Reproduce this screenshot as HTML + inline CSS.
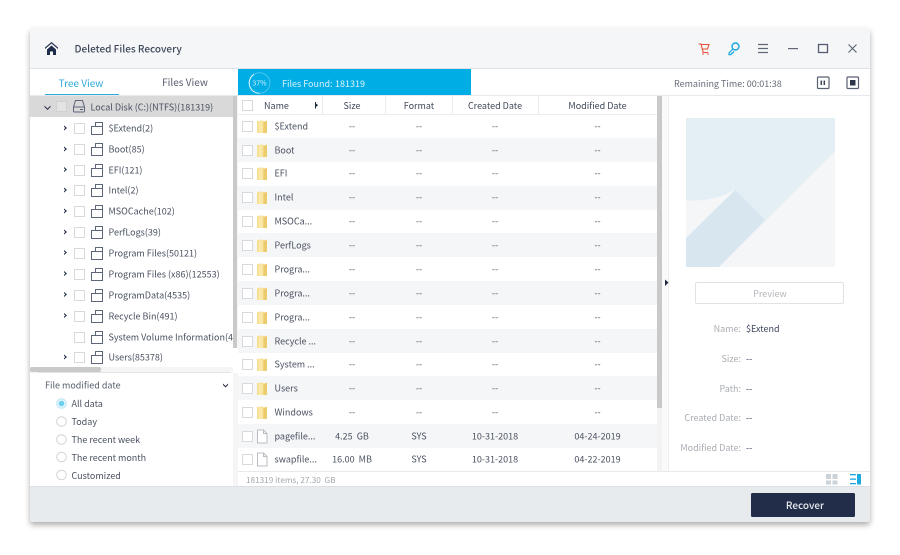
<!DOCTYPE html>
<html><head><meta charset="utf-8"><style>
html,body{margin:0;padding:0;background:#fff;width:900px;height:555px;overflow:hidden}
svg{display:block}
text{font-family:"Noto Sans CJK SC","Liberation Sans",sans-serif;font-size:9px;fill:#4a5160}
.m{text-anchor:middle}.e{text-anchor:end}
.cb{fill:#fff;stroke:#d8d9dc;stroke-width:1}
.ic{fill:none;stroke:#5d6578;stroke-width:1}
.t text{transform:translate(-.5px,-.5px)}
.r text{transform:translateY(-.5px)}
.r text.n{transform:translate(-.5px,-.5px)}
</style></head><body>
<svg width="900" height="555" viewBox="0 0 900 555" xmlns="http://www.w3.org/2000/svg">
<defs>
<filter id="s" x="-5%" y="-5%" width="110%" height="112%"><feDropShadow dx="0" dy="3" stdDeviation="3" flood-color="#000" flood-opacity=".32"/></filter>
<g id="fd"><path d="M.5 1.500 6 1 7.500 2H10.500V13.500H.5Z" fill="#f6de90"/><rect x="2" y="2" width="4" height="11.500" fill="#f9e8a8"/><path d="M7 2.500 10.500 1V13.500H7Z" fill="#eccb6c"/></g>
<g id="fl"><path d="M.5 .5H6.500L10 4V13.500H.5Z" fill="#fff" stroke="#b9bcc2"/><path d="M6.500 .5V4H10" fill="none" stroke="#b9bcc2"/></g>
<g id="tf"><path class="ic" d="M.5 4.500H4.500V.5H11.500V12.500H.5ZM.5 4.500H11.500" /></g>
<path id="ar" d="M0 0 3 2.500 0 5 0 3.700 1.300 2.500 0 1.300Z" fill="#1f2a40"/>
</defs>
<rect x="30" y="28" width="840" height="494" rx="3" fill="#fff" filter="url(#s)"/>
<!-- header -->
<path d="M30 69V31a3 3 0 0 1 3-3H867a3 3 0 0 1 3 3V69Z" fill="#f5f6f8"/>
<rect x="30" y="68" width="840" height="1" fill="#dfe1e6"/>
<path d="M45 47.500 51.500 42 58 47.500 58 49 51.500 43.500 45 49Z" fill="#1f2d4d"/><path d="M47 49.500 51.500 45.500 56 49.500V55H53V51.500H50V55H47Z" fill="#1f2d4d"/>
<text x="74.500" y="52.500" style="font-size:10px;font-weight:500;fill:#3f4859">Deleted Files Recovery</text>
<!-- header icons -->
<path d="M698.500 44h2.500l2.200 8.500h5M701.500 44.500h7.500l-1.500 4.500h-5" fill="none" stroke="#e8503a" stroke-width="1.100"/><circle cx="703" cy="54" r=".8" fill="#e8503a"/><circle cx="708" cy="54" r=".8" fill="#e8503a"/>
<circle cx="735.500" cy="46.500" r="3.500" fill="none" stroke="#14a7e0" stroke-width="1.400"/><path d="M733 49 729 53v1.700h2l.5-1.300 1.500-.4.800-1.800" fill="none" stroke="#14a7e0" stroke-width="1.200"/>
<path d="M758 44.500h10M758 48.500h10M758 52.500h10" stroke="#606878" stroke-width="1.200"/>
<rect x="788" y="48" width="10" height="1.200" fill="#606878"/>
<rect x="818.500" y="44.500" width="9" height="8" fill="none" stroke="#545d70" stroke-width="1.300"/>
<path d="M848.500 44.500l8 8M856.500 44.500l-8 8" stroke="#606878" stroke-width="1.200"/>
<!-- tabs -->
<text x="81" y="87" class="m" style="font-size:10px;fill:#2ea8d9">Tree View</text>
<text x="185" y="86" class="m" style="font-size:10px;fill:#555c6a">Files View</text>
<rect x="45" y="94" width="74" height="1.300" fill="#30aadb"/>
<!-- progress -->
<rect x="238" y="69" width="233" height="26" fill="#00ade5"/>
<circle cx="259.500" cy="83" r="10.300" fill="none" stroke="#4cc4ec" stroke-width="1"/>
<path d="M259.500 93.300A10.300 10.300 0 0 1 254 74.300" fill="none" stroke="#dff5fc" stroke-width="1"/>
<text x="259.500" y="85.500" class="m" style="font-size:7px;fill:#d5f1fb">37%</text>
<text x="282" y="87" style="fill:#d5f1fb">Files Found:</text>
<text x="335" y="87" style="fill:#e2f6fd">181319</text>
<text x="674" y="87" style="fill:#666c78">Remaining Time: 00:01:38</text>
<rect x="817.500" y="77" width="11.500" height="11.500" rx="1" fill="none" stroke="#596173" stroke-width="1.200"/><path d="M821.300 80.500v4.500M824.300 80.500v4.500" stroke="#3b4458" stroke-width="1.500"/>
<rect x="847" y="77" width="11.500" height="11.500" rx="1" fill="none" stroke="#596173" stroke-width="1.200"/><rect x="850" y="80" width="5.500" height="5.500" fill="#2c3549"/>
<rect x="30" y="95" width="840" height="1" fill="#e8e9ec"/>
<!-- tree -->
<rect x="30" y="96" width="203" height="21" fill="#d9d9da"/>
<rect x="233" y="96" width="5" height="391" fill="#f5f5f6"/>
<rect x="233" y="96" width="4" height="252" fill="#c9c9ca"/>
<path d="M44.500 105.500 47.500 108.500 50.500 105.500 50.500 107 47.500 110 44.500 107Z" fill="#2a3244"/>
<rect x="56.500" y="101.500" width="10" height="10" fill="#e3e3e4" stroke="#cfd0d2"/>
<path class="ic" d="M73.500 107 75.500 100.500H82.500L84.500 107V111a1 1 0 0 1-1 1h-9a1 1 0 0 1-1-1ZM73.500 107H84.500"/><rect x="80" y="109" width="3" height="1" fill="#545d70"/>
<g class="t"><text x="91" y="111">Local Disk (C:)(NTFS)(181319)</text>
<use href="#ar" x="64" y="125.500"/><rect class="cb" x="74.500" y="123.500" width="10" height="10"/><use href="#tf" x="91" y="122"/><text x="109" y="132">$Extend(2)</text>
<use href="#ar" x="64" y="146.500"/><rect class="cb" x="74.500" y="144.500" width="10" height="10"/><use href="#tf" x="91" y="143"/><text x="109" y="153">Boot(85)</text>
<use href="#ar" x="64" y="167"/><rect class="cb" x="74.500" y="165.500" width="10" height="10"/><use href="#tf" x="91" y="164"/><text x="109" y="174">EFI(121)</text>
<use href="#ar" x="64" y="187.500"/><rect class="cb" x="74.500" y="185.500" width="10" height="10"/><use href="#tf" x="91" y="184"/><text x="109" y="194">Intel(2)</text>
<use href="#ar" x="64" y="208.500"/><rect class="cb" x="74.500" y="206.500" width="10" height="10"/><use href="#tf" x="91" y="205"/><text x="109" y="215">MSOCache(102)</text>
<use href="#ar" x="64" y="229.500"/><rect class="cb" x="74.500" y="227.500" width="10" height="10"/><use href="#tf" x="91" y="226"/><text x="109" y="236">PerfLogs(39)</text>
<use href="#ar" x="64" y="250"/><rect class="cb" x="74.500" y="248.500" width="10" height="10"/><use href="#tf" x="91" y="247"/><text x="109" y="257">Program Files(50121)</text>
<use href="#ar" x="64" y="271"/><rect class="cb" x="74.500" y="269.500" width="10" height="10"/><use href="#tf" x="91" y="268"/><text x="109" y="278">Program Files (x86)(12553)</text>
<use href="#ar" x="64" y="292"/><rect class="cb" x="74.500" y="290.500" width="10" height="10"/><use href="#tf" x="91" y="289"/><text x="109" y="299">ProgramData(4535)</text>
<use href="#ar" x="64" y="313"/><rect class="cb" x="74.500" y="311.500" width="10" height="10"/><use href="#tf" x="91" y="310"/><text x="109" y="320">Recycle Bin(491)</text>
<rect class="cb" x="74.500" y="332.500" width="10" height="10"/><use href="#tf" x="91" y="331"/><text x="109" y="341">System Volume Information(4</text>
<use href="#ar" x="64" y="354.500"/><rect class="cb" x="74.500" y="352.500" width="10" height="10"/><use href="#tf" x="91" y="351"/><text x="109" y="361">Users(85378)</text>
</g>
<rect x="233" y="348" width="5" height="25" fill="#fff"/>
<rect x="30" y="367" width="203" height="6" fill="#f5f5f6"/>
<rect x="30" y="367" width="71" height="5" rx="2" fill="#c9c9ca"/>
<rect x="38" y="372" width="192" height="1" fill="#e3e4e7"/>
<text x="45" y="388.500" style="fill:#555c6a">File modified date</text>
<path d="M223 383.500 225.500 386 228 383.500 228 385 225.500 387.500 223 385Z" fill="#2a3244"/>
<circle cx="61.500" cy="403.500" r="4.800" fill="#e6f6fc" stroke="#bfe6f5"/><circle cx="61.500" cy="403.500" r="2.800" fill="#6cd0f0"/>
<text x="71.500" y="407">All data</text>
<circle cx="61.500" cy="421.500" r="4.800" fill="#fff" stroke="#d3d4d8"/><text x="71.500" y="425">Today</text>
<circle cx="61.500" cy="439.500" r="4.800" fill="#fff" stroke="#d3d4d8"/><text x="71.500" y="443">The recent week</text>
<circle cx="61.500" cy="457" r="4.800" fill="#fff" stroke="#d3d4d8"/><text x="71.500" y="461">The recent month</text>
<circle cx="61.500" cy="475" r="4.800" fill="#fff" stroke="#d3d4d8"/><text x="71.500" y="479">Customized</text>
<!-- table -->
<rect x="238" y="96" width="419" height="18" fill="#fff"/>
<rect x="238" y="114" width="419" height="1" fill="#ececee"/>
<path d="M322.500 96v18M385.500 96v18M452.500 96v18M538.500 96v18" stroke="#ececee"/>
<rect class="cb" x="242.500" y="100.500" width="10" height="10"/>
<text x="264" y="109" style="fill:#3f4859">Name</text>
<path d="M315 102v6.500h1V102ZM316 103.500l2.200 1.700-2.200 1.500Z" fill="#1f2a40"/>
<text x="352" y="109" class="m" style="fill:#3f4859">Size</text>
<text x="419" y="109" class="m" style="fill:#3f4859">Format</text>
<text x="495" y="109" class="m" style="fill:#3f4859">Created Date</text>
<text x="597.500" y="109" class="m" style="fill:#3f4859">Modified Date</text>
<g fill="#f5f6f8">
<rect x="238" y="138" width="419" height="24"/><rect x="238" y="186" width="419" height="24"/><rect x="238" y="233" width="419" height="24"/><rect x="238" y="281" width="419" height="24"/><rect x="238" y="329" width="419" height="24"/><rect x="238" y="376" width="419" height="24"/><rect x="238" y="424" width="419" height="24"/>
</g>
<g class="r">
<rect class="cb" x="242.500" y="121.500" width="10" height="10"/><use href="#fd" x="256.500" y="119.500"/><text class="n" x="275" y="130">$Extend</text><text x="352" y="130" class="m">--</text><text x="419" y="130" class="m">--</text><text x="495" y="130" class="m">--</text><text x="597.500" y="130" class="m">--</text>
<rect class="cb" x="242.500" y="145.500" width="10" height="10"/><use href="#fd" x="256.500" y="143.500"/><text class="n" x="275" y="154">Boot</text><text x="352" y="154" class="m">--</text><text x="419" y="154" class="m">--</text><text x="495" y="154" class="m">--</text><text x="597.500" y="154" class="m">--</text>
<rect class="cb" x="242.500" y="168.500" width="10" height="10"/><use href="#fd" x="256.500" y="166.500"/><text class="n" x="275" y="177">EFI</text><text x="352" y="177" class="m">--</text><text x="419" y="177" class="m">--</text><text x="495" y="177" class="m">--</text><text x="597.500" y="177" class="m">--</text>
<rect class="cb" x="242.500" y="192.500" width="10" height="10"/><use href="#fd" x="256.500" y="190.500"/><text class="n" x="275" y="201">Intel</text><text x="352" y="201" class="m">--</text><text x="419" y="201" class="m">--</text><text x="495" y="201" class="m">--</text><text x="597.500" y="201" class="m">--</text>
<rect class="cb" x="242.500" y="216.500" width="10" height="10"/><use href="#fd" x="256.500" y="214.500"/><text class="n" x="275" y="225">MSOCa...</text><text x="352" y="225" class="m">--</text><text x="419" y="225" class="m">--</text><text x="495" y="225" class="m">--</text><text x="597.500" y="225" class="m">--</text>
<rect class="cb" x="242.500" y="240.500" width="10" height="10"/><use href="#fd" x="256.500" y="238.500"/><text class="n" x="275" y="249">PerfLogs</text><text x="352" y="249" class="m">--</text><text x="419" y="249" class="m">--</text><text x="495" y="249" class="m">--</text><text x="597.500" y="249" class="m">--</text>
<rect class="cb" x="242.500" y="264.500" width="10" height="10"/><use href="#fd" x="256.500" y="262.500"/><text class="n" x="275" y="273">Progra...</text><text x="352" y="273" class="m">--</text><text x="419" y="273" class="m">--</text><text x="495" y="273" class="m">--</text><text x="597.500" y="273" class="m">--</text>
<rect class="cb" x="242.500" y="288.500" width="10" height="10"/><use href="#fd" x="256.500" y="286.500"/><text class="n" x="275" y="297">Progra...</text><text x="352" y="297" class="m">--</text><text x="419" y="297" class="m">--</text><text x="495" y="297" class="m">--</text><text x="597.500" y="297" class="m">--</text>
<rect class="cb" x="242.500" y="312.500" width="10" height="10"/><use href="#fd" x="256.500" y="310.500"/><text class="n" x="275" y="321">Progra...</text><text x="352" y="321" class="m">--</text><text x="419" y="321" class="m">--</text><text x="495" y="321" class="m">--</text><text x="597.500" y="321" class="m">--</text>
<rect class="cb" x="242.500" y="336.500" width="10" height="10"/><use href="#fd" x="256.500" y="334.500"/><text class="n" x="275" y="345">Recycle ...</text><text x="352" y="345" class="m">--</text><text x="419" y="345" class="m">--</text><text x="495" y="345" class="m">--</text><text x="597.500" y="345" class="m">--</text>
<rect class="cb" x="242.500" y="359.500" width="10" height="10"/><use href="#fd" x="256.500" y="357.500"/><text class="n" x="275" y="368">System ...</text><text x="352" y="368" class="m">--</text><text x="419" y="368" class="m">--</text><text x="495" y="368" class="m">--</text><text x="597.500" y="368" class="m">--</text>
<rect class="cb" x="242.500" y="383.500" width="10" height="10"/><use href="#fd" x="256.500" y="381.500"/><text class="n" x="275" y="392">Users</text><text x="352" y="392" class="m">--</text><text x="419" y="392" class="m">--</text><text x="495" y="392" class="m">--</text><text x="597.500" y="392" class="m">--</text>
<rect class="cb" x="242.500" y="407.500" width="10" height="10"/><use href="#fd" x="256.500" y="405.500"/><text class="n" x="275" y="416">Windows</text><text x="352" y="416" class="m">--</text><text x="419" y="416" class="m">--</text><text x="495" y="416" class="m">--</text><text x="597.500" y="416" class="m">--</text>
<rect class="cb" x="242.500" y="431.500" width="10" height="10"/><use href="#fl" x="257" y="429.500"/><text class="n" x="275" y="440">pagefile...</text><text x="352" y="440" class="m">4.25&#160;&#160;GB</text><text x="419" y="440" class="m">SYS</text><text x="495" y="440" class="m">10-31-2018</text><text x="597.500" y="440" class="m">04-24-2019</text>
<rect class="cb" x="242.500" y="454.500" width="10" height="10"/><use href="#fl" x="257" y="452.500"/><text class="n" x="275" y="463">swapfile...</text><text x="352" y="463" class="m">16.00&#160;&#160;MB</text><text x="419" y="463" class="m">SYS</text><text x="495" y="463" class="m">10-31-2018</text><text x="597.500" y="463" class="m">04-22-2019</text>
</g>
<rect x="238" y="471" width="632" height="1" fill="#e8e9ec"/>
<text x="246" y="483" style="font-size:8.200px;fill:#a4a8ae">181319 items, 27.30&#160;&#160;GB</text>
<!-- scrollbar -->
<rect x="657" y="96" width="5" height="375" fill="#f3f3f4"/>
<rect x="657" y="96" width="5" height="312" fill="#c9c9ca"/>
<rect x="662" y="96" width="7" height="375" fill="#fafafb"/>
<rect x="668" y="96" width="1" height="375" fill="#eceef0"/>
<path d="M665 279.500 668.500 282.500 665 286Z" fill="#1f2a40"/>
<!-- preview -->
<rect x="686" y="118" width="149" height="149" fill="#e3eef5"/>
<path d="M835 151V267H719Z" fill="#f4f6f8"/>
<path d="M735 190 765 220 719 267H686V238Z" fill="#d8e6ef"/>
<path d="M686 200.500C705 201 722 198 733 190L735 190 686 238Z" fill="#f4f6f8"/>
<rect x="695.500" y="282.500" width="148" height="21" rx="1.500" fill="#fff" stroke="#dfe2e6"/>
<text x="770" y="297" class="m" style="fill:#b4b7bc">Preview</text>
<text x="741" y="332" class="e" style="fill:#a9adb3">Name:</text>
<text x="741" y="362" class="e" style="fill:#a9adb3">Size:</text>
<text x="741" y="392" class="e" style="fill:#a9adb3">Path:</text>
<text x="741" y="421" class="e" style="fill:#a9adb3">Created Date:</text>
<text x="741" y="451" class="e" style="fill:#a9adb3">Modified Date:</text>
<text x="746" y="332" style="fill:#3d465c">$Extend</text>
<text x="746" y="362" style="fill:#3d465c">--</text>
<text x="746" y="392" style="fill:#3d465c">--</text>
<text x="746" y="421" style="fill:#3d465c">--</text>
<text x="746" y="451" style="fill:#3d465c">--</text>
<!-- view toggles -->
<g fill="#ccd3d9"><rect x="826" y="474" width="5" height="5"/><rect x="832.500" y="474" width="5" height="5"/><rect x="826" y="480.500" width="5" height="4"/><rect x="832.500" y="480.500" width="5" height="4"/></g>
<g fill="#1eaae0"><rect x="850" y="474" width="6" height="1.300"/><rect x="850" y="478.500" width="6" height="1.300"/><rect x="850" y="483" width="6" height="1.300"/><rect x="857" y="474" width="4" height="10.500"/></g>
<!-- footer -->
<path d="M30 487H870V519a3 3 0 0 1-3 3H33a3 3 0 0 1-3-3Z" fill="#e8ebee"/>
<rect x="30" y="486" width="840" height="1" fill="#dcdfe3"/>
<rect x="751" y="493" width="104" height="24" rx="1.500" fill="#212d49"/>
<text x="805" y="509" class="m" style="font-size:10px;font-weight:500;fill:#e8ebf0">Recover</text>
</svg>
</body></html>
